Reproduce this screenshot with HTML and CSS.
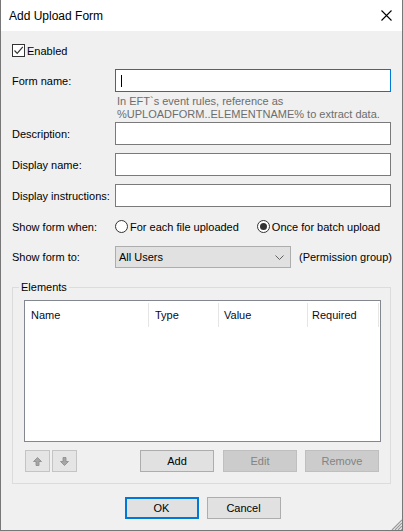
FILE: index.html
```html
<!DOCTYPE html>
<html>
<head>
<meta charset="utf-8">
<link rel="stylesheet" href="styles.css">
</head>
<body>
<div class="window">
  <div class="titlebar">
    <span class="title">Add Upload Form</span>
    <svg class="close" width="11" height="11" viewBox="0 0 11 11"><path d="M0.5 0.5 L10.5 10.5 M10.5 0.5 L0.5 10.5" stroke="#000" stroke-width="1.1" fill="none"/></svg>
  </div>
  <div class="content">
    <div class="check-row">
      <span class="checkbox"><svg width="11" height="11" viewBox="0 0 11 11"><path d="M1.5 5.5 L4.2 8.3 L9.8 1.8" stroke="#333" stroke-width="1.2" fill="none"/></svg></span>
      <span class="check-label">Enabled</span>
    </div>

    <div class="row first">
      <label class="lbl">Form name:</label>
      <div class="input focused"><span class="caret"></span></div>
    </div>
    <div class="hint">In EFT`s event rules, reference as<br>%UPLOADFORM..ELEMENTNAME% to extract data.</div>

    <div class="row desc">
      <label class="lbl">Description:</label>
      <div class="input"></div>
    </div>
    <div class="row gap8">
      <label class="lbl">Display name:</label>
      <div class="input"></div>
    </div>
    <div class="row gap8">
      <label class="lbl">Display instructions:</label>
      <div class="input"></div>
    </div>

    <div class="row radios">
      <label class="lbl">Show form when:</label>
      <div class="radio-group">
        <span class="radio"></span><span class="radio-text">For each file uploaded</span>
        <span class="radio checked second"><span class="dot"></span></span><span class="radio-text">Once for batch upload</span>
      </div>
    </div>

    <div class="row select-row">
      <label class="lbl">Show form to:</label>
      <div class="select">
        <span>All Users</span>
        <svg width="9" height="5" viewBox="0 0 9 5"><path d="M0.5 0.5 L4.5 4.5 L8.5 0.5" stroke="#606060" stroke-width="1" fill="none"/></svg>
      </div>
      <span class="perm">(Permission group)</span>
    </div>

    <div class="group">
      <span class="legend">Elements</span>
      <div class="listview">
        <div class="lv-header">
          <div class="col c1">Name</div>
          <div class="col c2">Type</div>
          <div class="col c3">Value</div>
          <div class="col c4">Required</div>
        </div>
      </div>
      <div class="group-buttons">
        <button class="arrow-btn"><svg width="9" height="9" viewBox="0 0 9 9"><path d="M4.5 0.5 L8.5 4.5 L6 4.5 L6 8.5 L3 8.5 L3 4.5 L0.5 4.5 Z" fill="#a6a6a6" stroke="#8c8c8c" stroke-width="0.8"/></svg></button>
        <button class="arrow-btn"><svg width="9" height="9" viewBox="0 0 9 9"><path d="M4.5 8.5 L8.5 4.5 L6 4.5 L6 0.5 L3 0.5 L3 4.5 L0.5 4.5 Z" fill="#a6a6a6" stroke="#8c8c8c" stroke-width="0.8"/></svg></button>
        <span class="spacer"></span>
        <button class="btn">Add</button>
        <button class="btn disabled">Edit</button>
        <button class="btn disabled">Remove</button>
      </div>
    </div>

    <div class="footer">
      <button class="btn default">OK</button>
      <button class="btn">Cancel</button>
    </div>
  </div>
  <svg class="grip" width="11" height="11" viewBox="0 0 11 11">
    <path d="M11 1 L1 11 M11 4 L4 11 M11 7 L7 11 M11 10 L10 11" stroke="#9a9a9a" stroke-width="1.2"/>
  </svg>
</div>
</body>
</html>
```

FILE: styles.css
```css
* { box-sizing: border-box; }
html, body { margin: 0; padding: 0; }
body {
  font-family: "Liberation Sans", Arial, sans-serif;
  font-size: 11px;
  color: #000;
  background: #f0f0f0;
}
.window {
  position: relative;
  width: 403px;
  height: 531px;
  background: #f0f0f0;
  border-left: 1px solid #777;
  border-right: 1px solid #777;
  border-bottom: 1px solid #777;
}
.titlebar {
  height: 31px;
  background: #fff;
  display: flex;
  align-items: center;
  padding-left: 8px;
  padding-right: 10px;
}
.title { font-size: 12px; flex: 1; }
.close { display: block; }
.content {
  padding: 13px 11px 0 11px;
}
.check-row {
  display: flex;
  align-items: center;
  height: 13px;
}
.checkbox {
  width: 13px;
  height: 13px;
  border: 1px solid #333;
  background: #fff;
  display: flex;
  align-items: center;
  justify-content: center;
}
.checkbox svg { display: block; }
.check-label { margin-left: 2px; }
.row {
  display: flex;
  align-items: center;
}
.row.first { margin-top: 12px; }
.row.desc { margin-top: 1px; }
.row.gap8 { margin-top: 8px; }
.lbl { width: 103px; flex: none; white-space: nowrap; }
.input {
  flex: 1;
  height: 23px;
  background: #fff;
  border: 1px solid #7a7a7a;
  position: relative;
}
.input.focused { border-color: #0078d7; }
.caret {
  position: absolute;
  left: 5px;
  top: 5px;
  width: 1px;
  height: 12px;
  background: #000;
}
.hint {
  margin-left: 105px;
  margin-top: 3px;
  line-height: 13px;
  color: #6d6d6d;
  height: 26px;
}
.row.radios { margin-top: 13px; height: 13px; }
.radio-group { display: flex; align-items: center; white-space: nowrap; }
.radio {
  width: 13px;
  height: 13px;
  border: 1px solid #333;
  border-radius: 50%;
  background: #fff;
  display: flex;
  align-items: center;
  justify-content: center;
  flex: none;
}
.radio .dot {
  width: 7px;
  height: 7px;
  border-radius: 50%;
  background: #333;
}
.radio.second { margin-left: 18px; }
.radio-text { margin-left: 2px; }
.row.select-row { margin-top: 13px; height: 22px; }
.select {
  flex: none;
  width: 176px;
  height: 22px;
  background: #e1e1e1;
  border: 1px solid #adadad;
  display: flex;
  align-items: center;
  justify-content: space-between;
  padding: 0 6px 0 3px;
}
.select svg { display: block; }
.perm { margin-left: 8px; white-space: nowrap; flex: none; }
.group {
  position: relative;
  margin-top: 19px;
  border: 1px solid #dcdcdc;
  padding: 12px 9px 11px 11px;
}
.legend {
  position: absolute;
  top: -7px;
  left: 6px;
  padding: 0 2px;
  background: #f0f0f0;
  line-height: 13px;
}
.listview {
  height: 142px;
  border: 1px solid #828790;
  background: #fff;
  padding-top: 2px;
}
.lv-header {
  display: flex;
  height: 24px;
}
.col {
  display: flex;
  align-items: center;
  padding-left: 6px;
  border-right: 1px solid #e5e5e5;
  color: #0a0a1e;
}
.c1 { width: 124px; }
.c2 { width: 70px; }
.c3 { width: 89px; padding-left: 5px; }
.c4 { width: 71px; padding-left: 4px; }
.group-buttons {
  display: flex;
  margin-top: 8px;
  height: 22px;
  padding-left: 1px;
}
.spacer { flex: 1; }
button {
  font-family: inherit;
  font-size: 11px;
  margin: 0;
  padding: 0;
}
.arrow-btn {
  width: 25px;
  height: 22px;
  background: #e5e5e5;
  border: 1px solid #c4c4c4;
  display: flex;
  align-items: center;
  justify-content: center;
  margin-right: 2px;
}
.arrow-btn svg { display: block; }
.btn {
  width: 74px;
  height: 22px;
  background: #e1e1e1;
  border: 1px solid #adadad;
  color: #000;
}
.group-buttons .btn { margin-left: 9px; }
.group-buttons .btn:last-child { margin-left: 8px; margin-right: 2px; }
.btn.disabled {
  background: #cccccc;
  border-color: #bfbfbf;
  color: #838383;
}
.footer {
  display: flex;
  justify-content: center;
  gap: 8px;
  margin-top: 13px;
  padding-left: 2px;
}
.btn.default { border: 2px solid #0078d7; }
.grip {
  position: absolute;
  right: 0;
  bottom: 0;
  display: block;
}
```
